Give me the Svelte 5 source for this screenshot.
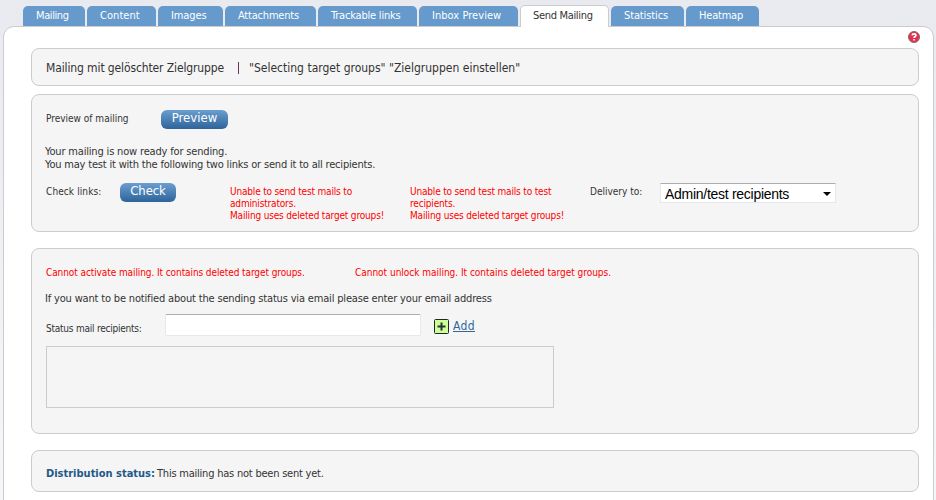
<script>
  const tabs = [
    { label: 'Mailing', width: 62, spacing: -0.4 },
    { label: 'Content', width: 69, spacing: 0.05 },
    { label: 'Images', width: 65, spacing: -0.1 },
    { label: 'Attachments', width: 91, spacing: -0.2 },
    { label: 'Trackable links', width: 99, spacing: -0.2 },
    { label: 'Inbox Preview', width: 99, spacing: 0.04 },
    { label: 'Send Mailing', width: 89, spacing: -0.32, active: true },
    { label: 'Statistics', width: 73, spacing: -0.12 },
    { label: 'Heatmap', width: 73, spacing: -0.2 }
  ];
</script>

<div class="page">
  <nav class="tabs">
    {#each tabs as tab}
      <span class="tab" class:active={tab.active} style="width: {tab.width}px; letter-spacing: {tab.spacing}px">{tab.label}</span>
    {/each}
  </nav>

  <main class="panel">
    <div class="help">
      <svg width="12" height="12" viewBox="0 0 12 12">
        <circle cx="6" cy="6" r="5.5" fill="#e5304b" stroke="#85696f" />
        <path d="M4.1 4.4C4.2 2.3 7.9 2.3 7.9 4.4C7.9 5.6 6 5.5 6 7.1M6 8.1V9.6" fill="none" stroke="#fff" stroke-width="1.6" />
      </svg>
    </div>

    <section class="box title">
      <span class="name">Mailing mit gelöschter Zielgruppe</span>
      <span class="bar"></span>
      <span>"Selecting target groups" "Zielgruppen einstellen"</span>
    </section>

    <section class="box sending">
      <div class="row preview">
        <span class="small">Preview of mailing</span>
        <button class="btn">Preview</button>
      </div>
      <p class="note">
        <span class="ready">Your mailing is now ready for sending.</span><br />
        You may test it with the following two links or send it to all recipients.
      </p>
      <div class="row links">
        <span class="small check-label">Check links:</span>
        <button class="btn check">Check</button>
        <p class="small error">Unable to send test mails to<br />administrators.<br />Mailing uses deleted target groups!</p>
        <p class="small error">Unable to send test mails to test<br />recipients.<br />Mailing uses deleted target groups!</p>
        <span class="small delivery">Delivery to:</span>
        <div class="select">
          <span>Admin/test recipients</span>
          <svg width="8" height="4" viewBox="0 0 8 4"><path d="M0 0H8L4 4Z" fill="#000" /></svg>
        </div>
      </div>
    </section>

    <section class="box status">
      <div class="row errors">
        <span class="small error activate">Cannot activate mailing. It contains deleted target groups.</span>
        <span class="small error unlock">Cannot unlock mailing. It contains deleted target groups.</span>
      </div>
      <p class="note notify">If you want to be notified about the sending status via email please enter your email address</p>
      <div class="row recipients">
        <span class="small recipients-label">Status mail recipients:</span>
        <input class="email" type="text" />
        <svg class="plus" width="15" height="15" viewBox="0 0 15 15">
          <rect x="0.5" y="0.5" width="14" height="14" rx="1" fill="#ccff99" stroke="#20252f" />
          <path d="M7.5 3.5V11.5M3.5 7.5H11.5" stroke="#2c3433" stroke-width="2" />
        </svg>
        <span class="add">Add</span>
      </div>
      <div class="list"></div>
    </section>

    <section class="box distribution">
      <b>Distribution status:</b>
      <span>This mailing has not been sent yet.</span>
    </section>
  </main>
</div>

<style>
  :global(body) {
    margin: 0;
    background: #e9ebf0;
  }
  .page {
    box-sizing: border-box;
    height: 500px;
    overflow: hidden;
    padding: 5px 2px 0 3px;
    background: linear-gradient(#e9eaef, #f5f6fa);
    color: #333;
    font-family: "DejaVu Sans Condensed", "DejaVu Sans", sans-serif;
    font-stretch: condensed;
    font-size: 11px;
    line-height: 13px;
  }
  p {
    margin: 0;
  }
  svg {
    display: block;
    flex: none;
  }
  .tabs {
    display: flex;
    align-items: flex-end;
    gap: 2px;
    height: 21px;
    padding-left: 20px;
  }
  .tab {
    box-sizing: border-box;
    flex: none;
    height: 20px;
    padding: 3px 0 0 13px;
    border-radius: 5px 5px 0 0;
    background: #6699cc;
    color: #fff;
    white-space: nowrap;
  }
  .tab.active {
    position: relative;
    height: 22px;
    margin-bottom: -1px;
    border: 1px solid #ccc;
    border-bottom: 0;
    padding-left: 12px;
    background: #fff;
    color: #333;
  }
  .panel {
    box-sizing: border-box;
    height: 510px;
    padding: 0 14px 0 27px;
    border: 1px solid #ccc;
    border-radius: 11px 11px 0 0;
    background: #fff;
  }
  .help {
    display: flex;
    justify-content: flex-end;
    height: 17px;
    padding-top: 4px;
    margin-right: -1px;
  }
  .box {
    box-sizing: border-box;
    width: 888px;
    border: 1px solid #ccc;
    border-radius: 8px;
    background: #f5f5f5;
  }
  .row {
    display: flex;
    align-items: flex-start;
  }
  .small {
    font-size: 10px;
    line-height: 12px;
    white-space: nowrap;
  }
  .error {
    color: #f00;
  }
  .title {
    display: flex;
    align-items: flex-start;
    height: 38px;
    padding: 12px 0 0 14px;
    font-size: 12px;
    line-height: 14px;
    white-space: nowrap;
  }
  .name {
    width: 192px;
    letter-spacing: -0.12px;
  }
  .bar {
    width: 1px;
    height: 12px;
    margin: 1px 10px 0 0;
    background: #67365c;
  }
  .sending {
    height: 138px;
    margin-top: 8px;
    padding: 15px 0 0 14px;
  }
  .preview .small {
    width: 115px;
    padding-top: 3px;
  }
  .btn {
    box-sizing: border-box;
    width: 67px;
    height: 19px;
    padding: 0 0 3px;
    border: 0;
    border-radius: 6px;
    background: linear-gradient(#6b9dd0, #2d6499);
    color: #fff;
    font: inherit;
    font-size: 13px;
    line-height: 16px;
  }
  .note {
    margin: 16px 0 0 -1px;
    letter-spacing: -0.19px;
    white-space: nowrap;
  }
  .ready {
    letter-spacing: -0.17px;
  }
  .links {
    margin-top: 12px;
  }
  .links .small {
    padding-top: 3px;
  }
  .links .check-label {
    width: 74px;
    letter-spacing: 0.1px;
  }
  .btn.check {
    width: 56px;
    margin-right: 54px;
    letter-spacing: -0.1px;
  }
  .links .error {
    width: 180px;
    letter-spacing: -0.17px;
  }
  .delivery {
    width: 70px;
  }
  .select {
    box-sizing: border-box;
    display: flex;
    align-items: center;
    justify-content: space-between;
    width: 176px;
    height: 20px;
    padding: 1px 4px 0 4px;
    border: 1px solid #e3e9ef;
    border-top-color: #abadb3;
    border-radius: 1px;
    background: #fff;
    color: #000;
    font: 14px/18px "Liberation Sans", Arial, sans-serif;
    letter-spacing: -0.28px;
    white-space: nowrap;
  }
  .status {
    height: 186px;
    margin-top: 16px;
    padding: 18px 0 0 14px;
  }
  .activate {
    width: 309px;
    letter-spacing: -0.09px;
  }
  .unlock {
    letter-spacing: -0.02px;
  }
  .notify {
    margin-top: 13px;
    letter-spacing: -0.17px;
  }
  .recipients {
    margin-top: 9px;
  }
  .recipients-label {
    width: 119px;
    padding-top: 9px;
    letter-spacing: -0.23px;
  }
  .email {
    box-sizing: border-box;
    width: 256px;
    height: 22px;
    margin: 0 13px 0 0;
    border: 1px solid #e3e9ef;
    border-top-color: #abadb3;
    border-radius: 2px;
    background: #fff;
  }
  .plus {
    margin: 5px 4px 0 0;
  }
  .add {
    height: 12px;
    margin-top: 5px;
    border-bottom: 1px solid #336699;
    color: #336699;
    font-size: 12px;
    line-height: 14px;
    letter-spacing: 0.3px;
  }
  .list {
    box-sizing: border-box;
    width: 508px;
    height: 62px;
    margin-top: 10px;
    border: 1px solid #ccc;
  }
  .distribution {
    display: flex;
    height: 42px;
    margin-top: 16px;
    padding: 16px 0 0 14px;
  }
  .distribution b {
    width: 111px;
    color: #235a88;
  }
  .distribution span {
    letter-spacing: -0.22px;
  }
</style>
